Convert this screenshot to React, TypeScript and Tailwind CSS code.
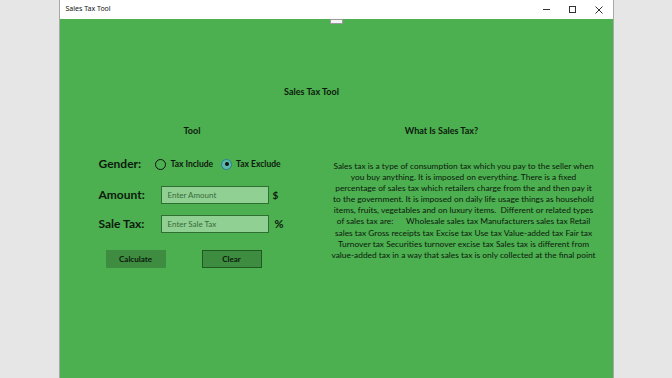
import React from "react";

const lines = [
  "Sales tax is a type of consumption tax which you pay to the seller when",
  "you buy anything. It is imposed on everything. There is a fixed",
  "percentage of sales tax which retailers charge from the and then pay it",
  "to the government. It is imposed on daily life usage things as household",
  "items, fruits, vegetables and on luxury items.\u00a0 Different or related types",
  "of sales tax are:\u00a0\u00a0\u00a0\u00a0\u00a0 Wholesale sales tax Manufacturers sales tax Retail",
  "sales tax Gross receipts tax Excise tax Use tax Value-added tax Fair tax",
  "Turnover tax Securities turnover excise tax Sales tax is different from",
  "value-added tax in a way that sales tax is only collected at the final point",
];

export default function App() {
  const font = { fontFamily: "Lato, 'Open Sans', sans-serif" };
  return (
    <div className="w-[672px] h-[378px] bg-[#e6e6e6] flex justify-center overflow-hidden" style={font}>
      <div className="w-[555px] h-[378px] flex flex-col border-x border-[#a8a8a8] bg-white">
        {/* title bar */}
        <div className="h-[19px] flex items-center bg-white text-[#111]">
          <span className="ml-[6px] text-[7px]" style={{ fontFamily: "'Noto Sans', sans-serif" }}>Sales Tax Tool</span>
          <div className="ml-auto flex items-center h-full">
            <div className="w-[26px] flex justify-center">
              <div className="w-[7px] h-px bg-[#333]" />
            </div>
            <div className="w-[26px] flex justify-center">
              <div className="w-[7px] h-[7px] border border-[#333]" />
            </div>
            <div className="w-[26px] flex justify-center mr-[1px]">
              <svg width="8" height="8" viewBox="0 0 8 8">
                <path d="M0.5 0.5 L7.5 7.5 M7.5 0.5 L0.5 7.5" stroke="#333" strokeWidth="1" />
              </svg>
            </div>
          </div>
        </div>
        {/* green content */}
        <div className="flex-1 bg-[#4caf50] flex flex-col text-[#0d1a0d]">
          <div className="flex">
            <div className="ml-[270px] w-[13px] h-[5px] bg-[#f4f4f4] border border-[#9a9a9a]" />
          </div>
          <div className="flex mt-[62px]">
            <div className="ml-[202px] w-[100px] text-center text-[9px] font-bold leading-[12px]">Sales Tax Tool</div>
          </div>
          <div className="flex mt-[21px]">
            {/* left column */}
            <div className="w-[265px] flex flex-col">
              <div className="text-center text-[9px] font-bold leading-[12px] mt-[6px]">Tool</div>
              <div className="flex items-center pl-[39px] mt-[19px] h-[16px]">
                <div className="w-[56px] text-[12px] font-bold">Gender:</div>
                <div className="w-[11px] h-[11px] rounded-full border-[1.5px] border-[#111]" />
                <span className="ml-[5px] text-[8.5px] font-bold">Tax Include</span>
                <div className="ml-[8px] w-[11px] h-[11px] rounded-full border-[1.5px] border-[#2a7f9a] bg-[#5cb8a8] flex items-center justify-center">
                  <div className="w-[4px] h-[4px] rounded-full bg-[#111]" />
                </div>
                <span className="ml-[4px] text-[8.5px] font-bold">Tax Exclude</span>
              </div>
              <div className="flex items-center pl-[39px] mt-[14px]">
                <div className="w-[62px] text-[12px] font-bold">Amount:</div>
                <div className="w-[108px] h-[18px] bg-[#90d092] border border-[#2f6f32] flex items-center px-[6px] text-[8px] text-[#3a6a3c]">Enter Amount</div>
                <span className="ml-[4px] text-[10px] font-bold">$</span>
              </div>
              <div className="flex items-center pl-[39px] mt-[11px]">
                <div className="w-[62px] text-[12px] font-bold">Sale Tax:</div>
                <div className="w-[108px] h-[18px] bg-[#90d092] border border-[#2f6f32] flex items-center px-[6px] text-[8px] text-[#3a6a3c]">Enter Sale Tax</div>
                <span className="ml-[6px] text-[11px] font-bold">%</span>
              </div>
              <div className="flex pl-[46px] mt-[17px]">
                <div className="w-[60px] h-[18px] bg-[#3d8c40] flex items-center justify-center text-[8px] font-bold">Calculate</div>
                <div className="ml-[36px] w-[60px] h-[18px] bg-[#3d8c40] border border-[#1e5a21] flex items-center justify-center text-[8px] font-bold">Clear</div>
              </div>
            </div>
            {/* right column */}
            <div className="flex-1 flex flex-col">
              <div className="flex mt-[6px]">
                <div className="ml-[67px] w-[100px] text-center text-[9px] font-bold leading-[12px]">What Is Sales Tax?</div>
              </div>
              <div className="mt-[24px] w-[278px] flex flex-col items-center text-[8.4px] leading-[11.1px]">
                {lines.map((l, i) => (
                  <div key={i} className="whitespace-pre">{l}</div>
                ))}
              </div>
            </div>
          </div>
        </div>
      </div>
    </div>
  );
}
